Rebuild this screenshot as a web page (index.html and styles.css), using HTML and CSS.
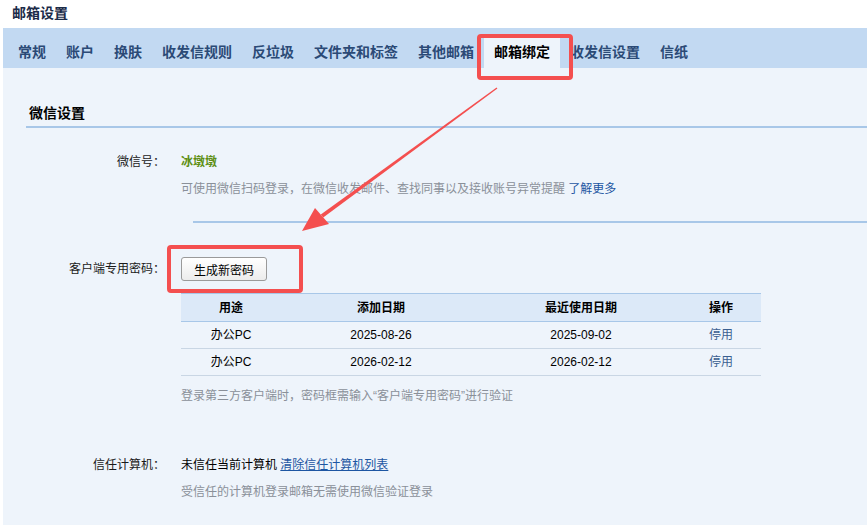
FILE: index.html
```html
<!DOCTYPE html>
<html lang="zh-CN">
<head>
    <meta charset="UTF-8">
    <title>邮箱设置</title>
    <link rel="stylesheet" href="styles.css">
</head>
<body>
    <div class="page">
        <div class="page-title">邮箱设置</div>

        <div class="tab-bar">
            <div class="tab">常规</div>
            <div class="tab">账户</div>
            <div class="tab">换肤</div>
            <div class="tab">收发信规则</div>
            <div class="tab">反垃圾</div>
            <div class="tab">文件夹和标签</div>
            <div class="tab">其他邮箱</div>
            <div class="tab active">邮箱绑定</div>
            <div class="tab">收发信设置</div>
            <div class="tab">信纸</div>
        </div>

        <div class="content">
            <div class="section-title">微信设置</div>

            <div class="form-row wechat-row">
                <div class="label">微信号：</div>
                <div class="value">
                    <div class="wechat-name">冰墩墩</div>
                    <div class="hint">可使用微信扫码登录，在微信收发邮件、查找同事以及接收账号异常提醒 <a class="link" href="#">了解更多</a></div>
                </div>
            </div>

            <div class="divider"></div>

            <div class="form-row password-row">
                <div class="label">客户端专用密码：</div>
                <div class="value">
                    <button class="btn">生成新密码</button>
                    <table class="pwd-table">
                        <thead>
                            <tr>
                                <th class="col-use">用途</th>
                                <th class="col-date">添加日期</th>
                                <th class="col-date">最近使用日期</th>
                                <th class="col-op">操作</th>
                            </tr>
                        </thead>
                        <tbody>
                            <tr>
                                <td>办公PC</td>
                                <td>2025-08-26</td>
                                <td>2025-09-02</td>
                                <td><a class="op" href="#">停用</a></td>
                            </tr>
                            <tr>
                                <td>办公PC</td>
                                <td>2026-02-12</td>
                                <td>2026-02-12</td>
                                <td><a class="op" href="#">停用</a></td>
                            </tr>
                        </tbody>
                    </table>
                    <div class="hint">登录第三方客户端时，密码框需输入“客户端专用密码”进行验证</div>
                </div>
            </div>

            <div class="form-row trust-row">
                <div class="label">信任计算机：</div>
                <div class="value">
                    <div class="trust-line">未信任当前计算机 <a class="link underline" href="#">清除信任计算机列表</a></div>
                    <div class="hint">受信任的计算机登录邮箱无需使用微信验证登录</div>
                </div>
            </div>
        </div>

        <!-- red annotation marks drawn over the screenshot -->
        <svg class="marks" width="867" height="525" viewBox="0 0 867 525">
            <rect x="479" y="36" width="92" height="42" rx="2" fill="none" stroke="#f44f4f" stroke-width="4"/>
            <rect x="169" y="247" width="132" height="44" rx="2" fill="none" stroke="#f44f4f" stroke-width="4"/>
            <polygon points="497.4,88.6 496.6,87.4 320.8,214.4 323.2,217.6" fill="#f44f4f"/>
            <polygon points="302,231 315,208 329,224" fill="#f44f4f"/>
        </svg>
    </div>
</body>
</html>
```

FILE: styles.css
```css
body {
    margin: 0;
    background-color: #ffffff;
    font-family: "Liberation Sans", "Noto Sans CJK SC", sans-serif;
    font-size: 12px;
    color: #000000;
}

.page {
    position: relative;
    width: 867px;
    height: 525px;
    overflow: hidden;
}

.page-title {
    height: 28px;
    line-height: 26px;
    padding-left: 12px;
    font-size: 14px;
    font-weight: bold;
    color: #1b2b48;
}

.tab-bar {
    display: flex;
    align-items: flex-end;
    margin-left: 3px;
    padding-left: 5px;
    height: 40px;
    background-color: #c2d9f2;
}

.tab {
    height: 32px;
    line-height: 32px;
    padding: 0 10px;
    font-size: 14px;
    font-weight: bold;
    color: #2b4a76;
    white-space: nowrap;
}

.tab.active {
    background-color: #eef4fb;
    color: #000000;
}

.content {
    margin-left: 3px;
    height: 457px;
    background-color: #eef4fb;
    padding-top: 30px;
    box-sizing: border-box;
}

.section-title {
    margin-left: 23px;
    padding-left: 3px;
    height: 28px;
    line-height: 30px;
    font-size: 14px;
    font-weight: bold;
    border-bottom: 2px solid #a8c7e8;
}

.form-row {
    display: grid;
    grid-template-columns: 162px 1fr;
    column-gap: 16px;
    line-height: 20px;
}

.label {
    text-align: right;
    color: #1a1a1a;
}

.wechat-row {
    margin-top: 24px;
}

.wechat-name {
    color: #5e8f14;
    font-weight: bold;
}

.hint {
    margin-top: 7px;
    color: #8a9099;
}

.link {
    color: #1d56a2;
    text-decoration: none;
}

.link.underline {
    text-decoration: underline;
}

.divider {
    margin: 22px 0 0 190px;
    border-top: 2px solid #a8c7e8;
}

.password-row {
    margin-top: 34px;
}

.password-row .label {
    padding-top: 2px;
}

.btn {
    display: block;
    width: 86px;
    height: 24px;
    padding: 0;
    font-family: inherit;
    font-size: 12px;
    color: #000000;
    background: linear-gradient(#ffffff, #ececec);
    border: 1px solid #9a9a9a;
    border-radius: 3px;
}

.pwd-table {
    margin-top: 12px;
    width: 580px;
    border-collapse: collapse;
    text-align: center;
}

.pwd-table th {
    height: 27px;
    padding: 0;
    background-color: #dce9f8;
    border-top: 1px solid #a8c7e8;
    border-bottom: 1px solid #a8c7e8;
    font-weight: bold;
}

.pwd-table td {
    height: 26px;
    padding: 0;
    border-bottom: 1px solid #c9d6e4;
}

.col-use {
    width: 100px;
}

.col-date {
    width: 200px;
}

.col-op {
    width: 80px;
}

.op {
    color: #3a5f90;
    text-decoration: none;
}

.password-row .hint {
    margin-top: 10px;
}

.trust-row {
    margin-top: 49px;
}

.marks {
    position: absolute;
    left: 0;
    top: 0;
    pointer-events: none;
}
```
